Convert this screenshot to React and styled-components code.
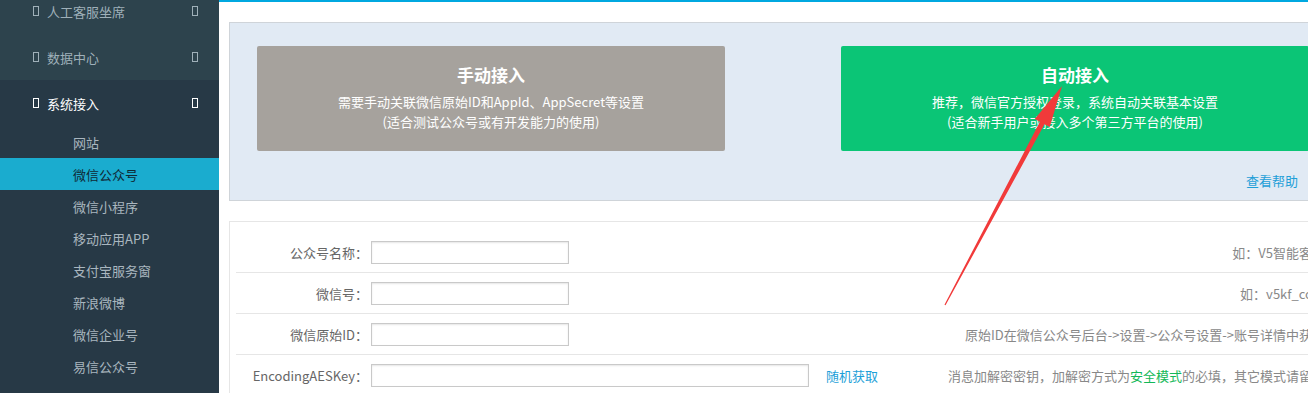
import React from "react";
import styled, { createGlobalStyle } from "styled-components";

const GlobalStyle = createGlobalStyle`
  html, body { margin: 0; padding: 0; }
  body {
    width: 1308px;
    height: 393px;
    overflow: hidden;
    background: #fff;
    font-family: "Noto Sans CJK SC", "Noto Sans", sans-serif;
    font-size: 13px;
  }
  * { box-sizing: border-box; }
`;

const Page = styled.div`
  position: relative;
  display: flex;
  width: 1308px;
  height: 393px;
  overflow: hidden;
`;

const Sidebar = styled.nav`
  width: 219px;
  flex-shrink: 0;
  background: #273946;
  overflow: hidden;
`;

const NavList = styled.div`
  display: flex;
  flex-direction: column;
  margin-top: -12px;
`;

const TopItem = styled.div`
  display: flex;
  align-items: center;
  height: 46px;
  padding: 0 21px 0 33px;
  background: ${(p) => (p.$active ? "#273946" : "#2d434d")};
  color: ${(p) => (p.$active ? "#ffffff" : "#9fb0b9")};
  line-height: 1;
`;

const Glyph = styled.span`
  display: inline-block;
  width: 6px;
  height: 10px;
  border: 1px solid currentColor;
  flex-shrink: 0;
  ${(p) => (p.$right ? "margin-left: auto;" : "")}
`;

const TopLabel = styled.span`
  margin-left: 8px;
`;

const SubItem = styled.div`
  display: flex;
  align-items: center;
  height: 32px;
  padding-left: 73px;
  background: ${(p) => (p.$active ? "#1aaccf" : "transparent")};
  color: ${(p) => (p.$active ? "#0f2a36" : "#a9b6bf")};
`;

const Main = styled.main`
  flex: 1;
  border-top: 2px solid #00a8e0;
  background: #fff;
  overflow: hidden;
  padding: 20px 0 0 10px;
`;

const Panel = styled.section`
  width: 1100px;
  border: 1px solid #cfd4d9;
  background: #e1eaf4;
  padding: 23px 0 10px 27px;
`;

const ButtonRow = styled.div`
  display: flex;
  gap: 116px;
`;

const ModeButton = styled.div`
  width: 468px;
  height: 105px;
  border-radius: 2px;
  background: ${(p) => p.$bg};
  color: #fff;
  display: flex;
  flex-direction: column;
  align-items: center;
  padding-top: 17px;
  text-align: center;
`;

const ModeTitle = styled.div`
  font-size: 17px;
  font-weight: bold;
  line-height: 24px;
  margin-bottom: 5px;
`;

const ModeLine = styled.div`
  font-size: 13px;
  line-height: 20px;
`;

const HelpRow = styled.div`
  margin-top: 21px;
  line-height: 18px;
  text-align: right;
  padding-right: 30px;
`;

const Link = styled.a`
  color: #1e9fd8;
  text-decoration: none;
  white-space: nowrap;
  ${(p) => (p.$gap ? `margin-left: ${p.$gap}px;` : "")}
`;

const FormBox = styled.section`
  margin-top: 20px;
  width: 1111px;
  border: 1px solid #e6e6e6;
  border-bottom: none;
  padding: 10px 6px 0;
`;

const FormRow = styled.div`
  display: flex;
  align-items: center;
  height: 41px;
  border-bottom: 1px solid #e6e6e6;
`;

const Label = styled.label`
  width: 135px;
  flex-shrink: 0;
  padding-right: 3px;
  text-align: right;
  color: #666;
  white-space: nowrap;
`;

const TextInput = styled.input`
  width: ${(p) => (p.$wide ? 438 : 198)}px;
  height: 23px;
  border: 1px solid #c9c9c9;
  box-shadow: inset 0 1px 2px rgba(0, 0, 0, 0.1);
  background: #fff;
  padding: 0 4px;
  font: inherit;
  outline: none;
`;

const Hint = styled.span`
  margin-left: auto;
  padding-right: 8px;
  color: #888;
  white-space: nowrap;
`;

const Green = styled.span`
  color: #13b858;
`;

const ArrowLayer = styled.svg`
  position: absolute;
  left: 0;
  top: 0;
  width: 1308px;
  height: 393px;
  pointer-events: none;
`;

const subItems = [
  "网站",
  "微信公众号",
  "微信小程序",
  "移动应用APP",
  "支付宝服务窗",
  "新浪微博",
  "微信企业号",
  "易信公众号",
  "微信小程序(旧)",
];

function Arrow() {
  const tail = [945, 305];
  const tip = [1062, 86];
  const dx = tip[0] - tail[0];
  const dy = tip[1] - tail[1];
  const len = Math.hypot(dx, dy);
  const u = [dx / len, dy / len];
  const n = [-u[1], u[0]];
  const headLen = 42;
  const base = [tip[0] - u[0] * headLen, tip[1] - u[1] * headLen];
  const pt = (p, k) => [p[0] + n[0] * k, p[1] + n[1] * k];
  const pts = [
    pt(tail, -0.6),
    pt(base, -2.6),
    pt(base, -8.5),
    tip,
    pt(base, 8.5),
    pt(base, 2.6),
    pt(tail, 0.6),
  ];
  return (
    <ArrowLayer viewBox="0 0 1308 393">
      <polygon points={pts.map((p) => p.join(",")).join(" ")} fill="#f13a3a" />
    </ArrowLayer>
  );
}

export default function App() {
  return (
    <>
      <GlobalStyle />
      <Page>
        <Sidebar>
          <NavList>
            <TopItem>
              <Glyph />
              <TopLabel>人工客服坐席</TopLabel>
              <Glyph $right />
            </TopItem>
            <TopItem>
              <Glyph />
              <TopLabel>数据中心</TopLabel>
              <Glyph $right />
            </TopItem>
            <TopItem $active>
              <Glyph />
              <TopLabel>系统接入</TopLabel>
              <Glyph $right />
            </TopItem>
            {subItems.map((s) => (
              <SubItem key={s} $active={s === "微信公众号"}>
                {s}
              </SubItem>
            ))}
          </NavList>
        </Sidebar>
        <Main>
          <Panel>
            <ButtonRow>
              <ModeButton $bg="#a6a29d">
                <ModeTitle>手动接入</ModeTitle>
                <ModeLine>需要手动关联微信原始ID和AppId、AppSecret等设置</ModeLine>
                <ModeLine>(适合测试公众号或有开发能力的使用)</ModeLine>
              </ModeButton>
              <ModeButton $bg="#0bc576">
                <ModeTitle>自动接入</ModeTitle>
                <ModeLine>推荐，微信官方授权登录，系统自动关联基本设置</ModeLine>
                <ModeLine>(适合新手用户或接入多个第三方平台的使用)</ModeLine>
              </ModeButton>
            </ButtonRow>
            <HelpRow>
              <Link href="#">查看帮助</Link>
            </HelpRow>
          </Panel>
          <FormBox>
            <FormRow>
              <Label>公众号名称：</Label>
              <TextInput />
              <Hint>如：V5智能客服</Hint>
            </FormRow>
            <FormRow>
              <Label>微信号：</Label>
              <TextInput />
              <Hint>如：v5kf_com</Hint>
            </FormRow>
            <FormRow>
              <Label>微信原始ID：</Label>
              <TextInput />
              <Hint>原始ID在微信公众号后台-&gt;设置-&gt;公众号设置-&gt;账号详情中获取</Hint>
            </FormRow>
            <FormRow>
              <Label>EncodingAESKey：</Label>
              <TextInput $wide />
              <Link href="#" $gap={17}>随机获取</Link>
              <Hint>
                消息加解密密钥，加解密方式为<Green>安全模式</Green>的必填，其它模式请留空
              </Hint>
            </FormRow>
          </FormBox>
        </Main>
        <Arrow />
      </Page>
    </>
  );
}
